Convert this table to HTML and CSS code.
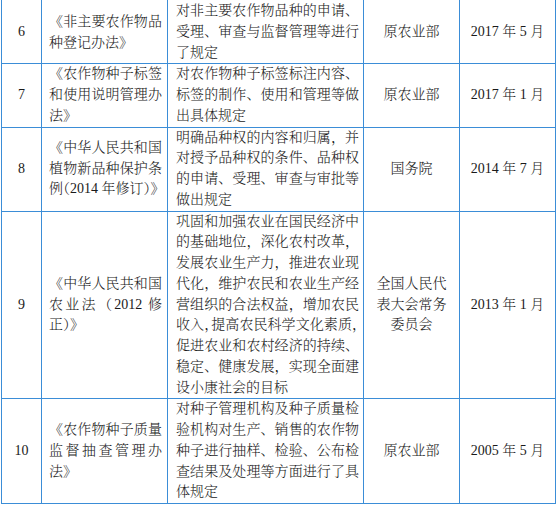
FILE: index.html
```html
<!DOCTYPE html>
<html lang="zh-CN">
<head>
<meta charset="utf-8">
<title>农业法规表</title>
<link rel="stylesheet" href="styles.css">
</head>
<body>
<table class="tbl">
  <colgroup>
    <col class="c-no"><col class="c-name"><col class="c-desc"><col class="c-org"><col class="c-date">
  </colgroup>
  <tr class="first">
    <td class="no">6</td>
    <td class="name"><div class="j">《非主要农作物品</div><div>种登记办法》</div></td>
    <td class="desc"><div class="j">对非主要农作物品种的申请、</div><div class="j">受理、审查与监督管理等进行</div><div>了规定</div></td>
    <td class="org">原农业部</td>
    <td class="date">2017 年 5 月</td>
  </tr>
  <tr>
    <td class="no">7</td>
    <td class="name"><div class="j">《农作物种子标签</div><div class="j">和使用说明管理办</div><div>法》</div></td>
    <td class="desc"><div class="j">对农作物种子标签标注内容、</div><div class="j">标签的制作、使用和管理等做</div><div>出具体规定</div></td>
    <td class="org">原农业部</td>
    <td class="date">2017 年 1 月</td>
  </tr>
  <tr>
    <td class="no">8</td>
    <td class="name"><div class="j">《中华人民共和国</div><div class="j">植物新品种保护条</div><div class="tight">例<span class="h">（</span>2014 年修订<span class="h">）</span>》</div></td>
    <td class="desc"><div class="j">明确品种权的内容和归属，并</div><div class="j">对授予品种权的条件、品种权</div><div class="j">的申请、受理、审查与审批等</div><div>做出规定</div></td>
    <td class="org">国务院</td>
    <td class="date">2014 年 7 月</td>
  </tr>
  <tr>
    <td class="no">9</td>
    <td class="name"><div class="j">《中华人民共和国</div><div class="j">农业法（2012 修</div><div>正）》</div></td>
    <td class="desc"><div class="j">巩固和加强农业在国民经济中</div><div class="j">的基础地位，深化农村改革，</div><div class="j">发展农业生产力，推进农业现</div><div class="j">代化，维护农民和农业生产经</div><div class="j">营组织的合法权益，增加农民</div><div class="j">收入<span class="h">，</span>提高农民科学文化素质<span class="h">，</span></div><div class="j">促进农业和农村经济的持续、</div><div class="j">稳定、健康发展，实现全面建</div><div>设小康社会的目标</div></td>
    <td class="org"><div>全国人民代</div><div>表大会常务</div><div>委员会</div></td>
    <td class="date">2013 年 1 月</td>
  </tr>
  <tr>
    <td class="no">10</td>
    <td class="name"><div class="j">《农作物种子质量</div><div class="j">监督抽查管理办</div><div>法》</div></td>
    <td class="desc"><div class="j">对种子管理机构及种子质量检</div><div class="j">验机构对生产、销售的农作物</div><div class="j">种子进行抽样、检验、公布检</div><div class="j">查结果及处理等方面进行了具</div><div>体规定</div></td>
    <td class="org">原农业部</td>
    <td class="date">2005 年 5 月</td>
  </tr>
</table>
</body>
</html>
```
FILE: styles.css
```css
html, body {
  margin: 0;
  padding: 0;
  background: #ffffff;
}

body {
  font-family: "Liberation Serif", "Noto Serif CJK SC", "Source Han Serif SC", "Noto Sans CJK SC", serif;
  font-size: 14px;
  font-weight: 300;
  line-height: 20.75px;
  color: #1a1a1a;
}

.tbl {
  border-collapse: collapse;
  table-layout: fixed;
  width: 554px;
  margin: -1px 0 0 1px;
}

.c-no { width: 40px; }
.c-name { width: 126px; }
.c-desc { width: 196px; }
.c-org { width: 96px; }
.c-date { width: 96px; }

.tbl td {
  border: 1px solid #3b8dd7;
  padding: 0;
  vertical-align: middle;
}

.tbl tr.first td {
  padding-top: 1px;
}

.no {
  text-align: center;
  font-weight: 400;
}

.name {
  padding: 0 5px 0 7px !important;
}

.tbl tr.first td.name {
  padding-top: 3px !important;
}

.desc {
  padding: 0 4px 0 8px !important;
  vertical-align: top;
}

.tbl tr.first td.desc {
  padding-top: 1px !important;
}

.org, .date {
  text-align: center;
}

.j {
  text-align: justify;
  text-align-last: justify;
  white-space: nowrap;
}

.tight {
  white-space: nowrap;
}

.h {
  font-feature-settings: "halt";
}
```
